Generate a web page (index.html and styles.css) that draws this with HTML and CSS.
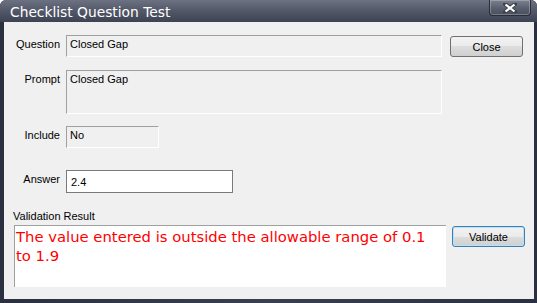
FILE: index.html
```html
<!DOCTYPE html>
<html lang="en">
<head>
    <meta charset="UTF-8">
    <title>Checklist Question Test</title>
    <link rel="stylesheet" href="styles.css">
</head>
<body>
    <div class="window">
        <div class="titlebar">
            <span class="title">Checklist Question Test</span>
            <div class="close-x">
                <svg width="14" height="10" viewBox="0 0 14 10">
                    <path d="M2 1 L12 9 M12 1 L2 9" stroke="#3a3f4c" stroke-width="4" stroke-linecap="square"/>
                    <path d="M2.5 1.5 L11.5 8.5 M11.5 1.5 L2.5 8.5" stroke="#ffffff" stroke-width="2.2"/>
                </svg>
            </div>
        </div>
        <div class="client">
            <div class="row">
                <label class="lbl">Question</label>
                <div class="field wide">Closed Gap</div>
                <button class="btn close-btn">Close</button>
            </div>
            <div class="row prompt-row">
                <label class="lbl">Prompt</label>
                <div class="field wide tall">Closed Gap</div>
            </div>
            <div class="row include-row">
                <label class="lbl">Include</label>
                <div class="field short">No</div>
            </div>
            <div class="row answer-row">
                <label class="lbl">Answer</label>
                <input class="answer" type="text" value="2.4">
            </div>
            <div class="result-label">Validation Result</div>
            <div class="result-row">
                <div class="result">The value entered is outside the allowable range of 0.1 to 1.9</div>
                <button class="btn validate-btn">Validate</button>
            </div>
        </div>
    </div>
</body>
</html>
```

FILE: styles.css
```css
* {
    box-sizing: border-box;
}
body {
    margin: 0;
    background-color: #ffffff;
    font-family: "Liberation Sans", Arial, sans-serif;
    font-size: 11px;
    color: #000000;
}
.window {
    width: 537px;
    height: 303px;
    background: linear-gradient(to right, #2b3040, #3a3f50 50%, #2b3040);
    border-radius: 6px 6px 0 0;
    padding: 0 3px 4px 4px;
    display: flex;
    flex-direction: column;
}
.titlebar {
    height: 22px;
    margin: 0 -3px 0 -4px;
    padding: 0 6px 0 10px;
    border-radius: 6px 6px 0 0;
    background: linear-gradient(to bottom, #6d7282, #555a6a 45%, #3e4354 100%);
    display: flex;
    align-items: flex-start;
    justify-content: space-between;
}
.title {
    color: #ffffff;
    line-height: 24px;
    font-family: "DejaVu Sans", sans-serif;
    font-size: 13.8px;
}
.close-x {
    width: 42px;
    height: 16px;
    border: 1px solid #2a2e3a;
    border-top: none;
    border-radius: 0 0 4px 4px;
    background: linear-gradient(to bottom, #7c8190, #5a5f6f 55%, #4a4f5e);
    box-shadow: inset 0 0 0 1px rgba(255, 255, 255, 0.25);
    display: flex;
    align-items: center;
    justify-content: center;
}
.client {
    flex: 1;
    background-color: #f0f0f0;
    padding-top: 13px;
}
.row {
    display: flex;
    align-items: flex-start;
}
.lbl {
    width: 56px;
    text-align: right;
    margin-right: 6px;
    padding-top: 3px;
}
.field {
    height: 22px;
    border-top: 1px solid #a0a0a0;
    border-left: 1px solid #a0a0a0;
    border-right: 1px solid #ffffff;
    border-bottom: 1px solid #ffffff;
    padding: 2px 3px;
}
.wide {
    width: 376px;
}
.tall {
    height: 44px;
}
.short {
    width: 93px;
}
.prompt-row {
    margin-top: 13px;
}
.include-row {
    margin-top: 12px;
}
.answer-row {
    margin-top: 22px;
}
.answer {
    width: 167px;
    height: 23px;
    margin: 0;
    border: 1px solid #7a7a7a;
    background-color: #ffffff;
    padding: 1px 4px;
    font-family: "Liberation Sans", Arial, sans-serif;
    font-size: 11px;
}
.btn {
    width: 73px;
    height: 21px;
    border: 1px solid #707070;
    border-radius: 3px;
    background: linear-gradient(to bottom, #f2f2f2, #ebebeb 50%, #dddddd 50%, #cfcfcf);
    font-family: "Liberation Sans", Arial, sans-serif;
    font-size: 11px;
    color: #000000;
    padding: 0;
}
.close-btn {
    margin-left: 8px;
    margin-top: 1px;
}
.result-label {
    margin: 17px 0 0 9px;
}
.result-row {
    display: flex;
    align-items: flex-start;
    margin-top: 3px;
}
.result {
    width: 432px;
    height: 62px;
    margin-left: 10px;
    background-color: #ffffff;
    border-top: 1px solid #a0a0a0;
    border-left: 1px solid #a0a0a0;
    color: #ff0000;
    font-family: "DejaVu Sans", sans-serif;
    font-size: 14.8px;
    line-height: 19px;
    padding: 1px 1px;
}
.validate-btn {
    margin-left: 6px;
    margin-top: 1px;
    border-color: #3c7fb1;
    box-shadow: inset 0 0 0 1px #b7e2f7;
}
```
